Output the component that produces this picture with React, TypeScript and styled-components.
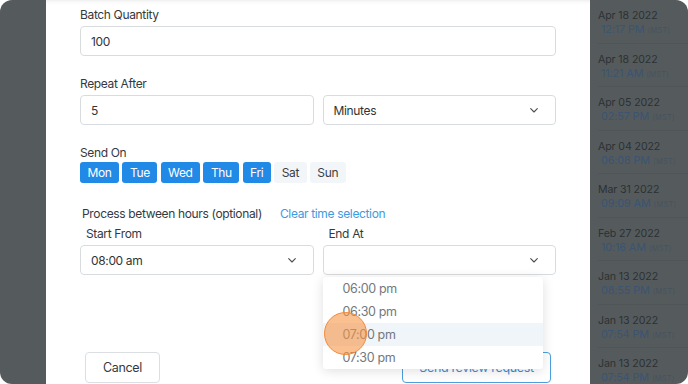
import React from "react";
import styled, { createGlobalStyle } from "styled-components";

const Global = createGlobalStyle`
  html, body { margin: 0; padding: 0; background: #ffffff; }
  body { font-family: Inter, "Noto Sans", Arial, sans-serif; -webkit-font-smoothing: antialiased; letter-spacing: -0.35px; }
  * { box-sizing: border-box; }
`;

const Frame = styled.div`
  position: relative;
  width: 688px;
  height: 384px;
  border-radius: 12px;
  overflow: hidden;
  background: #555b5d;
  display: flex;
`;

const LeftGutter = styled.div`
  width: 46px;
  flex: none;
`;

const Modal = styled.div`
  width: 544px;
  flex: none;
  background: #ffffff;
  padding: 8px 34px 0 34px;
  display: flex;
  flex-direction: column;
  box-shadow: inset 0 5px 5px -5px rgba(0, 0, 0, 0.12);
`;

const Field = styled.div<{ $mt?: number }>`
  position: relative;
  margin-top: ${(p) => p.$mt ?? 0}px;
  display: flex;
  flex-direction: column;
`;

const Label = styled.div<{ $indent?: number }>`
  font-size: 12px;
  line-height: 14px;
  color: #333a3f;
  padding-left: ${(p) => p.$indent ?? 0}px;
`;

const Input = styled.div`
  margin-top: 4px;
  height: 30px;
  border: 1px solid #d9dcde;
  border-radius: 4px;
  display: flex;
  align-items: center;
  padding: 0 10px;
  font-size: 12px;
  color: #2f3437;
  background: #fff;
`;

const Select = styled(Input)`
  justify-content: space-between;
  padding-right: 17px;
`;

const Row = styled.div`
  display: grid;
  grid-template-columns: 1fr 1fr;
  column-gap: 9px;
`;

const Days = styled.div`
  margin-top: 2px;
  display: flex;
  gap: 3.3px;
`;

const Day = styled.div<{ $on: boolean }>`
  height: 21px;
  padding: 0 7.5px;
  border-radius: 3px;
  display: flex;
  align-items: center;
  font-size: 12px;
  background: ${(p) => (p.$on ? "#2189e6" : "#f3f6f8")};
  color: ${(p) => (p.$on ? "#ffffff" : "#3a3f43")};
`;

const ProcessLine = styled.div`
  margin-top: 24px;
  display: flex;
  gap: 18px;
  padding-left: 2px;
  font-size: 12px;
  line-height: 14px;
  color: #333a3f;
`;

const LinkText = styled.span`
  color: #3d9be0;
`;

const Footer = styled.div`
  margin-top: 77px;
  display: flex;
  justify-content: space-between;
  padding: 0 5px;
`;

const Button = styled.div<{ $primary?: boolean }>`
  height: 31px;
  border-radius: 4px;
  display: flex;
  align-items: center;
  justify-content: center;
  font-size: 12.5px;
  border: 1px solid ${(p) => (p.$primary ? "#4b9fdc" : "#dcdfe1")};
  color: ${(p) => (p.$primary ? "#3b8fd6" : "#333a3f")};
  width: ${(p) => (p.$primary ? 149 : 75)}px;
  background: #fff;
`;

const Dropdown = styled.div`
  position: absolute;
  top: calc(100% + 2px);
  left: 0;
  width: 220px;
  background: #fff;
  border-radius: 4px;
  box-shadow: 0 2px 12px rgba(0, 0, 0, 0.13);
  overflow: hidden;
  z-index: 5;
`;

const Option = styled.div<{ $active?: boolean }>`
  height: 23px;
  display: flex;
  align-items: center;
  padding-left: 20px;
  font-size: 12.5px;
  color: #73787c;
  background: ${(p) => (p.$active ? "#f0f5f9" : "#fff")};
`;

const Touch = styled.div`
  position: absolute;
  left: 1px;
  top: 85px;
  width: 43px;
  height: 43px;
  border-radius: 50%;
  background: rgba(246, 150, 70, 0.6);
  border: 1.5px solid #f1893a;
  z-index: 6;
`;

const Side = styled.div`
  flex: 1;
  display: flex;
  flex-direction: column;
  padding-left: 8px;
  letter-spacing: -0.1px;
`;

const Entry = styled.div`
  flex: none;
  height: 43.5px;
  padding-top: 9px;
  border-bottom: 1px solid rgba(0, 0, 0, 0.05);
  white-space: nowrap;
`;

const EntryDate = styled.div`
  font-size: 10.6px;
  line-height: 14px;
  color: #2c3133;
`;

const EntryTime = styled.div`
  font-size: 10.8px;
  line-height: 14px;
  color: #3a5472;
  padding-left: 3px;
`;

const Zone = styled.span`
  font-size: 7.5px;
  letter-spacing: 0.2px;
  color: #45535e;
  margin-left: 3px;
`;

const Chevron = () => (
  <svg width="8" height="5" viewBox="0 0 8 5" fill="none">
    <path d="M0.7 0.7l3.3 3.3 3.3-3.3" stroke="#4a4f53" strokeWidth="1.1" strokeLinecap="round" strokeLinejoin="round" />
  </svg>
);

const days = [
  { d: "Mon", on: true },
  { d: "Tue", on: true },
  { d: "Wed", on: true },
  { d: "Thu", on: true },
  { d: "Fri", on: true },
  { d: "Sat", on: false },
  { d: "Sun", on: false },
];

const entries = [
  ["Apr 18 2022", "12:17 PM"],
  ["Apr 18 2022", "11:21 AM"],
  ["Apr 05 2022", "02:57 PM"],
  ["Apr 04 2022", "06:08 PM"],
  ["Mar 31 2022", "09:09 AM"],
  ["Feb 27 2022", "10:16 AM"],
  ["Jan 13 2022", "08:55 PM"],
  ["Jan 13 2022", "07:54 PM"],
  ["Jan 13 2022", "07:54 PM"],
];

export default function App() {
  return (
    <>
      <Global />
      <Frame>
        <LeftGutter />
        <Modal>
          <Field>
            <Label>Batch Quantity</Label>
            <Input>100</Input>
          </Field>
          <Field $mt={21}>
            <Label>Repeat After</Label>
            <Row>
              <Input>5</Input>
              <Select>
                <span>Minutes</span>
                <Chevron />
              </Select>
            </Row>
          </Field>
          <Field $mt={21}>
            <Label>Send On</Label>
            <Days>
              {days.map((x) => (
                <Day key={x.d} $on={x.on}>
                  {x.d}
                </Day>
              ))}
            </Days>
          </Field>
          <ProcessLine>
            <span>Process between hours (optional)</span>
            <LinkText>Clear time selection</LinkText>
          </ProcessLine>
          <Row>
            <Field $mt={6}>
              <Label $indent={6}>Start From</Label>
              <Select>
                <span>08:00 am</span>
                <Chevron />
              </Select>
            </Field>
            <Field $mt={6}>
              <Label $indent={6}>End At</Label>
              <Select>
                <span />
                <Chevron />
              </Select>
              <Dropdown>
                <Option>06:00 pm</Option>
                <Option>06:30 pm</Option>
                <Option $active>07:00 pm</Option>
                <Option>07:30 pm</Option>
              </Dropdown>
              <Touch />
            </Field>
          </Row>
          <Footer>
            <Button>Cancel</Button>
            <Button $primary>Send review request</Button>
          </Footer>
        </Modal>
        <Side>
          {entries.map(([d, t], i) => (
            <Entry key={i}>
              <EntryDate>{d}</EntryDate>
              <EntryTime>
                {t}
                <Zone>(MST)</Zone>
              </EntryTime>
            </Entry>
          ))}
        </Side>
      </Frame>
    </>
  );
}
